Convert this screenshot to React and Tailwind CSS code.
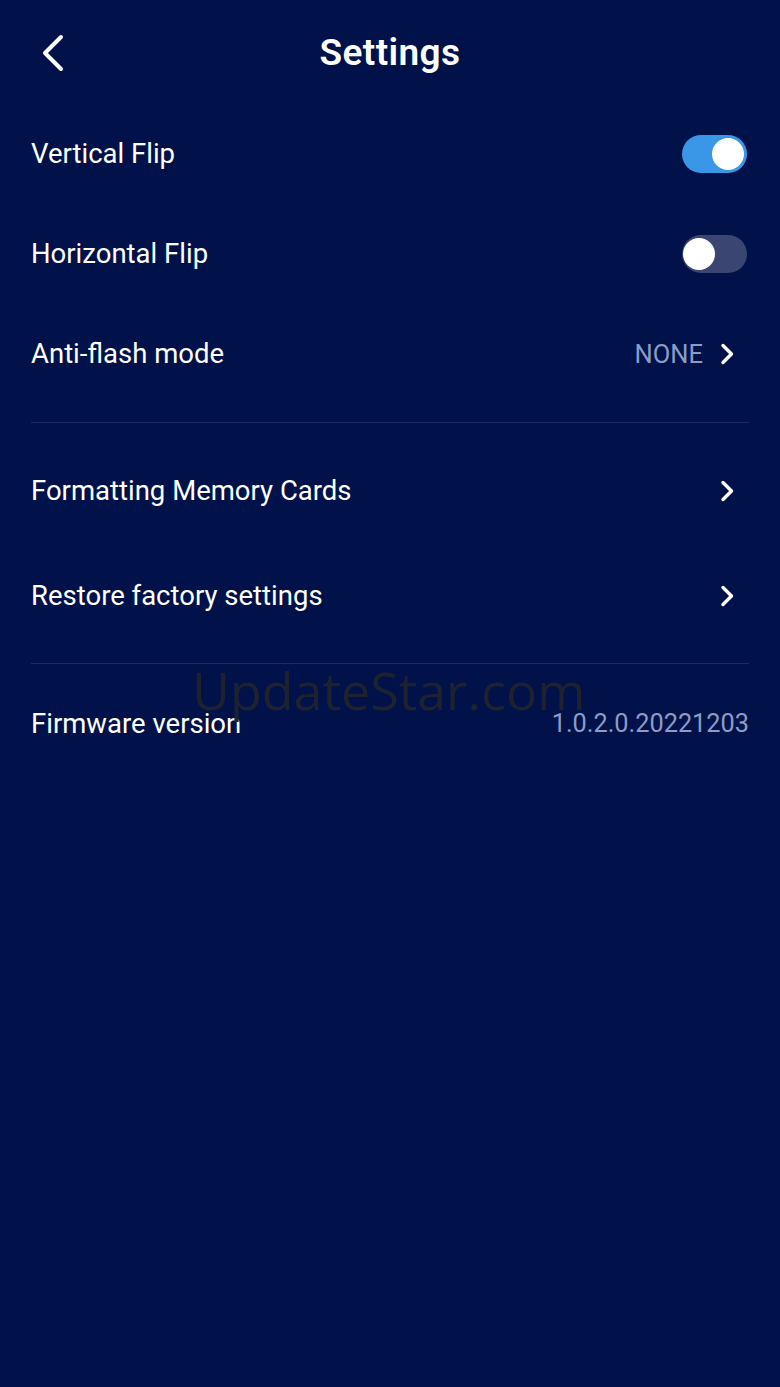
import { useState } from 'react';

const Chevron = ({ className = '' }) => (
  <svg viewBox="0 0 14 22" className={className} fill="none">
    <path d="M2.5 2.5 L11 11 L2.5 19.5" stroke="white" strokeWidth="3.4" strokeLinecap="round" strokeLinejoin="round" />
  </svg>
);

const Toggle = ({ on, onChange }) => (
  <button
    onClick={onChange}
    className={`relative w-[65px] h-[38px] rounded-full mr-[2px] ${on ? 'bg-[#3a96e6]' : 'bg-[#3a4571]'}`}
  >
    <span
      className={`absolute top-[3px] w-[32px] h-[32px] rounded-full bg-white ${on ? 'left-[30px]' : 'left-[1px]'}`}
    />
  </button>
);

const Row = ({ label, children, h = 'h-[100px]' }) => (
  <div className={`flex items-center justify-between ${h}`}>
    <span className="text-[27.5px] text-white">{label}</span>
    <div className="flex items-center">{children}</div>
  </div>
);

const App = () => {
  const [vFlip, setVFlip] = useState(true);
  const [hFlip, setHFlip] = useState(false);

  return (
    <div
      className="relative min-h-[1387px] w-full bg-[#001249] text-white"
      style={{ fontFamily: 'Roboto, "Liberation Sans", sans-serif' }}
    >
      <header className="relative flex items-center justify-center h-[106px]">
        <button className="absolute left-[40px] top-[34px]">
          <svg viewBox="0 0 26 38" className="w-[26px] h-[38px]" fill="none">
            <path d="M21 3 L5 19 L21 35" stroke="white" strokeWidth="4" strokeLinecap="round" strokeLinejoin="round" />
          </svg>
        </button>
        <h1 className="text-[37px] font-semibold tracking-[0.4px]">Settings</h1>
      </header>

      <div className="px-[31px]">
        <div className="-mt-[2px]">
          <Row label="Vertical Flip">
            <Toggle on={vFlip} onChange={() => setVFlip(!vFlip)} />
          </Row>
        </div>
        <Row label="Horizontal Flip">
          <Toggle on={hFlip} onChange={() => setHFlip(!hFlip)} />
        </Row>
        <Row label="Anti-flash mode">
          <span className="text-[25.5px] text-[#8c9cc6] mr-[17px]">NONE</span>
          <Chevron className="w-[15px] h-[22px] mr-[14px]" />
        </Row>

        <div className="mt-[18px] h-px bg-[#1c2c62]" />

        <div className="py-[15px]">
          <Row label="Formatting Memory Cards" h="h-[105px]">
            <Chevron className="w-[15px] h-[22px] mr-[14px]" />
          </Row>
          <Row label="Restore factory settings" h="h-[105px]">
            <Chevron className="w-[15px] h-[22px] mr-[14px]" />
          </Row>
        </div>

        <div className="h-px bg-[#1c2c62]" />

        <Row label="Firmware version" h="h-[120px]">
          <span className="text-[25.3px] text-[#8c9cc6]">1.0.2.0.20221203</span>
        </Row>
      </div>

      <div
        className="absolute left-[192px] top-[664px] text-[52px] text-[#1e2130] leading-none pointer-events-none"
        style={{ fontFamily: '"Open Sans", sans-serif' }}
      >
        UpdateStar.com
      </div>
    </div>
  );
};

export default App;
